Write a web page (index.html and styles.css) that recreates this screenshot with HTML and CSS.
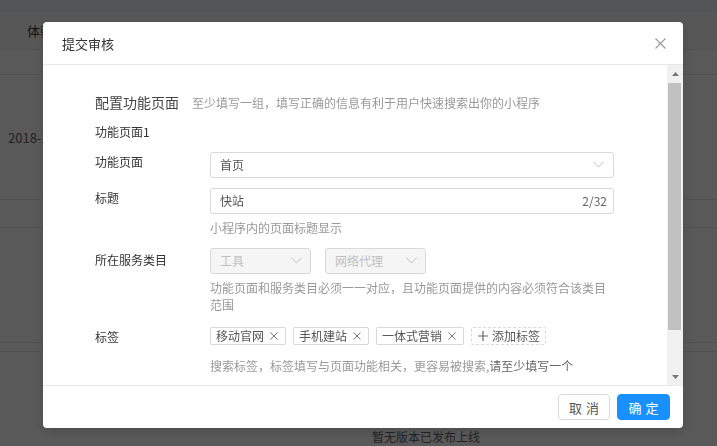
FILE: index.html
```html
<!DOCTYPE html>
<html lang="zh-CN">
<head>
    <meta charset="UTF-8">
    <meta name="viewport" content="width=device-width, initial-scale=1.0">
    <title>提交审核</title>
    <link rel="stylesheet" href="styles.css">
</head>
<body>
    <div class="page">
        <div class="page-top"></div>
        <div class="table">
            <div class="table-row table-head"><span>体验版</span></div>
            <div class="table-row row-sub"></div>
            <div class="table-row row-main"><span>2018-12-20</span></div>
            <div class="table-row row-sub2"></div>
            <div class="table-row row-main2"></div>
            <div class="table-row row-gap"></div>
            <div class="table-empty">暂无版本已发布上线</div>
        </div>
    </div>

    <div class="mask"></div>

    <div class="modal">
        <div class="modal-header">
            <span class="modal-title">提交审核</span>
            <span class="modal-close">
                <svg width="11" height="11" viewBox="0 0 11 11"><path d="M0.5 0.5L10.5 10.5M10.5 0.5L0.5 10.5" stroke="#999" stroke-width="1.1" fill="none"/></svg>
            </span>
        </div>

        <div class="modal-body">
            <div class="body-content">
                <div class="section-title">
                    <span>配置功能页面</span>
                    <span class="section-tip">至少填写一组，填写正确的信息有利于用户快速搜索出你的小程序</span>
                </div>
                <div class="group-title">功能页面1</div>

                <div class="form-item item-page">
                    <label class="form-label">功能页面</label>
                    <div class="form-control">
                        <div class="select">
                            <span class="select-value">首页</span>
                            <svg class="arrow" width="11" height="7" viewBox="0 0 11 7"><path d="M0.5 0.8L5.5 6L10.5 0.8" stroke="#bfbfbf" stroke-width="1" fill="none"/></svg>
                        </div>
                    </div>
                </div>

                <div class="form-item item-title">
                    <label class="form-label">标题</label>
                    <div class="form-control">
                        <div class="input">
                            <span class="input-value">快站</span>
                            <span class="input-count">2/32</span>
                        </div>
                        <div class="form-help">小程序内的页面标题显示</div>
                    </div>
                </div>

                <div class="form-item item-category">
                    <label class="form-label">所在服务类目</label>
                    <div class="form-control">
                        <div class="select-group">
                            <div class="select select-small disabled">
                                <span class="select-value">工具</span>
                                <svg class="arrow" width="11" height="7" viewBox="0 0 11 7"><path d="M0.5 0.8L5.5 6L10.5 0.8" stroke="#bfbfbf" stroke-width="1" fill="none"/></svg>
                            </div>
                            <div class="select select-small disabled">
                                <span class="select-value">网络代理</span>
                                <svg class="arrow" width="11" height="7" viewBox="0 0 11 7"><path d="M0.5 0.8L5.5 6L10.5 0.8" stroke="#bfbfbf" stroke-width="1" fill="none"/></svg>
                            </div>
                        </div>
                        <div class="form-help">功能页面和服务类目必须一一对应，且功能页面提供的内容必须符合该类目范围</div>
                    </div>
                </div>

                <div class="form-item item-tags">
                    <label class="form-label">标签</label>
                    <div class="form-control">
                        <div class="tags">
                            <span class="tag">移动官网<svg width="8" height="8" viewBox="0 0 8 8"><path d="M0.5 0.5L7.5 7.5M7.5 0.5L0.5 7.5" stroke="#777" stroke-width="1" fill="none"/></svg></span>
                            <span class="tag">手机建站<svg width="8" height="8" viewBox="0 0 8 8"><path d="M0.5 0.5L7.5 7.5M7.5 0.5L0.5 7.5" stroke="#777" stroke-width="1" fill="none"/></svg></span>
                            <span class="tag">一体式营销<svg width="8" height="8" viewBox="0 0 8 8"><path d="M0.5 0.5L7.5 7.5M7.5 0.5L0.5 7.5" stroke="#777" stroke-width="1" fill="none"/></svg></span>
                            <span class="tag tag-add"><svg width="10" height="10" viewBox="0 0 10 10"><path d="M5 0V10M0 5H10" stroke="#666" stroke-width="1.2" fill="none"/></svg>添加标签</span>
                        </div>
                        <div class="form-help">搜索标签，标签填写与页面功能相关，更容易被搜索,<span class="help-strong">请至少填写一个</span></div>
                    </div>
                </div>
            </div>

            <div class="scrollbar">
                <div class="scroll-btn">
                    <svg width="7" height="4" viewBox="0 0 7 4"><path d="M0 4L3.5 0L7 4Z" fill="#777"/></svg>
                </div>
                <div class="scroll-track"><div class="scroll-thumb"></div></div>
                <div class="scroll-btn">
                    <svg width="7" height="4" viewBox="0 0 7 4"><path d="M0 0L3.5 4L7 0Z" fill="#777"/></svg>
                </div>
            </div>
        </div>

        <div class="modal-footer">
            <button class="btn">取消</button>
            <button class="btn btn-primary">确定</button>
        </div>
    </div>
</body>
</html>
```

FILE: styles.css
```css
* {
    margin: 0;
    padding: 0;
    box-sizing: border-box;
}

body {
    font-family: "Noto Sans CJK SC", "Microsoft YaHei", sans-serif;
    font-size: 12px;
    color: #333;
    background-color: #f0f2f5;
    height: 446px;
    overflow: hidden;
}

/* page behind the dialog */
.page-top {
    height: 12px;
}

.table {
    background-color: #fff;
    height: 434px;
}

.table-row {
    display: flex;
    align-items: center;
    border-bottom: 1px solid #e8e8e8;
}

.table-head {
    height: 38px;
    padding-left: 27px;
    background-color: #fafafa;
    font-size: 13px;
}

.row-sub {
    height: 25px;
}

.row-main {
    height: 125px;
    padding-left: 8px;
    font-size: 13px;
    color: #666;
}

.row-sub2 {
    height: 28px;
}

.row-main2 {
    height: 115px;
}

.row-gap {
    height: 9px;
}

.table-empty {
    padding: 76px 0 0 372px;
    line-height: 18px;
    color: #666;
}

.mask {
    position: fixed;
    top: 0;
    left: 0;
    right: 0;
    bottom: 0;
    background-color: rgba(0, 0, 0, 0.65);
}

/* dialog */
.modal {
    position: fixed;
    top: 22px;
    left: 43px;
    width: 640px;
    height: 406px;
    background-color: #fff;
    border-radius: 4px;
    box-shadow: 0 4px 12px rgba(0, 0, 0, 0.15);
    display: flex;
    flex-direction: column;
    overflow: hidden;
}

.modal-header {
    height: 43px;
    padding: 0 17px 0 19px;
    border-bottom: 1px solid #e8e8e8;
    display: flex;
    align-items: center;
    justify-content: space-between;
}

.modal-title {
    font-size: 13px;
    color: #333;
}

.modal-close {
    display: flex;
}

.modal-body {
    height: 320px;
    display: flex;
}

.body-content {
    flex: 1;
    overflow: hidden;
    padding: 27px 0 0 52px;
}

.section-title {
    display: flex;
    align-items: baseline;
    gap: 13px;
    font-size: 14px;
    line-height: 20px;
    color: #444;
}

.section-tip {
    font-size: 12px;
    color: #999;
}

.group-title {
    margin-top: 10px;
    line-height: 18px;
    font-size: 12px;
    color: #333;
}

.form-item {
    display: flex;
    align-items: flex-start;
}

.item-page {
    margin-top: 11px;
}

.item-title {
    margin-top: 10px;
}

.item-category {
    margin-top: 12px;
}

.item-tags {
    margin-top: 14px;
}

.form-label {
    width: 115px;
    line-height: 20px;
    font-size: 12px;
    color: #333;
}

.item-category .form-label {
    padding-top: 2px;
}

.form-control {
    width: 404px;
}

.select,
.input {
    height: 26px;
    border: 1px solid #d9d9d9;
    border-radius: 3px;
    background-color: #fff;
    display: flex;
    align-items: center;
    padding: 0 9px 1px 9px;
    color: #555;
}

.select-value,
.input-value {
    flex: 1;
}

.input {
    padding-right: 6px;
}

.input-count {
    color: #666;
}

.select-group {
    display: flex;
    gap: 14px;
}

.select-small {
    width: 101px;
    padding-right: 8px;
}

.select.disabled {
    background-color: #f5f5f5;
    color: #bfbfbf;
}

.form-help {
    margin-top: 5px;
    line-height: 17px;
    color: #999;
}

.help-strong {
    color: #666;
}

.item-tags .form-help {
    margin-top: 12px;
}

.tags {
    display: flex;
    gap: 7px;
}

.tag {
    height: 18px;
    display: flex;
    align-items: center;
    gap: 6px;
    padding: 0 7px 0 5px;
    border: 1px solid #d9d9d9;
    border-radius: 2px;
    color: #555;
    line-height: 16px;
}

.tag-add {
    border-style: dashed;
    gap: 4px;
    padding: 0 5px 0 6px;
}

/* scrollbar */
.scrollbar {
    width: 16px;
    background-color: #f1f1f1;
    display: flex;
    flex-direction: column;
}

.scroll-btn {
    height: 17px;
    display: flex;
    align-items: center;
    justify-content: center;
    padding-left: 1px;
}

.scroll-track {
    flex: 1;
    padding: 1px 2px 0 1px;
}

.scroll-thumb {
    height: 247px;
    background-color: #c1c1c1;
}

/* footer */
.modal-footer {
    height: 43px;
    border-top: 1px solid #e8e8e8;
    display: flex;
    justify-content: flex-end;
    gap: 7px;
    padding: 8px 13px 0 0;
}

.btn {
    height: 26px;
    width: 52px;
    border: 1px solid #d9d9d9;
    border-radius: 4px;
    background-color: #fff;
    color: #555;
    font-family: inherit;
    font-size: 13px;
    letter-spacing: 4px;
    padding-left: 4px;
}

.btn-primary {
    width: 53px;
    border-color: #1890ff;
    background-color: #1890ff;
    color: #fff;
}
```
